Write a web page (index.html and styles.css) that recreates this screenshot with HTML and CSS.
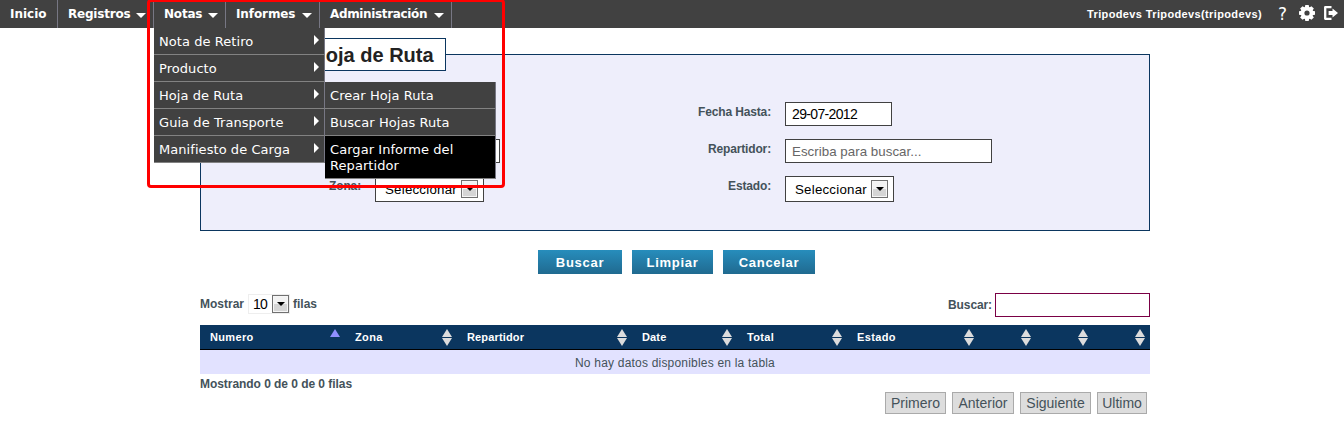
FILE: index.html
```html
<!DOCTYPE html>
<html lang="es">
<head>
<meta charset="utf-8">
<title>Hoja de Ruta</title>
<link rel="stylesheet" href="styles.css">
</head>
<body>
<header class="topbar">
  <nav class="menu">
    <a class="item inicio">Inicio</a>
    <a class="item registros">Registros<i class="down"></i></a>
    <div class="item notas">Notas<i class="down"></i>
      <div class="submenu">
        <a>Nota de Retiro<i class="right"></i></a>
        <a>Producto<i class="right"></i></a>
        <a>Hoja de Ruta<i class="right"></i></a>
        <a>Guia de Transporte<i class="right"></i></a>
        <a>Manifiesto de Carga<i class="right"></i></a>
      </div>
      <div class="submenu second">
        <a>Crear Hoja Ruta</a>
        <a>Buscar Hojas Ruta</a>
        <a class="active">Cargar Informe del<br>Repartidor</a>
      </div>
    </div>
    <a class="item informes">Informes<i class="down"></i></a>
    <a class="item admin">Administración<i class="down"></i></a>
  </nav>
  <div class="user">
    <span class="name">Tripodevs Tripodevs(tripodevs)</span>
    <span class="help">?</span>
    <svg class="gear" width="16" height="16" viewBox="0 0 16 16"><g fill="#fff"><path d="M6.3 0h3.4l.6 3H5.700zM6.300 16h3.400l.6-3H5.700z"/><path transform="rotate(45 8 8)" d="M6.300 0h3.400l.6 3H5.700zM6.300 16h3.400l.6-3H5.700z"/><path transform="rotate(90 8 8)" d="M6.300 0h3.400l.6 3H5.700zM6.300 16h3.400l.6-3H5.700z"/><path transform="rotate(135 8 8)" d="M6.300 0h3.400l.6 3H5.700zM6.300 16h3.400l.6-3H5.700z"/></g><circle cx="8" cy="8" r="4.400" fill="none" stroke="#fff" stroke-width="3.600"/></svg>
    <svg class="exit" width="14" height="14" viewBox="0 0 14 14"><path d="M7.500 1.200H1.200V12.800H7.500" fill="none" stroke="#fff" stroke-width="2.300" stroke-linejoin="round"/><path fill="#fff" d="M4.600 5H8.500V2.500L14 7 8.500 11.500V9H4.600z"/></svg>
  </div>
</header>

<main class="page">
  <fieldset class="filters">
    <legend>Buscar Hoja de Ruta</legend>
    <div class="form">
      <span></span><div></div>
      <label>Fecha Hasta:</label><div><span class="field date">29-07-2012</span></div>
      <span></span><div><span class="field number"></span></div>
      <label>Repartidor:</label><div><span class="field search">Escriba para buscar...</span></div>
      <label>Zona:</label><div><span class="field select">Seleccionar<b class="arrow"></b></span></div>
      <label>Estado:</label><div><span class="field select">Seleccionar<b class="arrow"></b></span></div>
    </div>
  </fieldset>

  <div class="actions">
    <button class="buscar">Buscar</button>
    <button class="limpiar">Limpiar</button>
    <button class="cancelar">Cancelar</button>
  </div>

  <div class="tools">
    <div class="length">Mostrar<span class="rows">10<b class="arrow"></b></span>filas</div>
    <div class="filter">Buscar:<input type="text"></div>
  </div>

  <table class="grid">
    <colgroup><col class="c145"><col class="c112"><col class="c175"><col class="c105"><col class="c110"><col class="c132"><col class="c57"><col class="c57"><col class="c57"></colgroup>
    <thead><tr>
      <th><div>Numero<i class="sort asc"></i></div></th>
      <th><div>Zona<i class="sort"></i></div></th>
      <th><div>Repartidor<i class="sort"></i></div></th>
      <th><div>Date<i class="sort"></i></div></th>
      <th><div>Total<i class="sort"></i></div></th>
      <th><div>Estado<i class="sort"></i></div></th>
      <th><div><i class="sort"></i></div></th>
      <th><div><i class="sort"></i></div></th>
      <th><div><i class="sort"></i></div></th>
    </tr></thead>
    <tbody><tr><td colspan="9">No hay datos disponibles en la tabla</td></tr></tbody>
  </table>

  <div class="info">Mostrando 0 de 0 de 0 filas</div>
  <div class="pager"><a class="p1">Primero</a><a class="p2">Anterior</a><a class="p3">Siguiente</a><a class="p4">Ultimo</a></div>
</main>
<div class="highlight"></div>
</body>
</html>
```
FILE: styles.css
```css
* { box-sizing: border-box; }
body {
  margin: 0;
  height: 422px;
  overflow: hidden;
  background: #fff;
  color: #44525a;
  font-family: "Liberation Sans", Arial, sans-serif;
  font-size: 12px;
}

/* top bar */
.topbar {
  display: flex;
  justify-content: space-between;
  height: 28px;
  background: #414141;
  color: #fff;
}
.menu {
  display: flex;
  font: bold 12px/28px "DejaVu Sans", Verdana, sans-serif;
  letter-spacing: -.2px;
}
.item {
  position: relative;
  display: flex;
  justify-content: space-between;
  align-items: center;
  height: 28px;
  padding: 0 7px 0 10px;
  border-right: 1px solid #777784;
  white-space: nowrap;
}
.inicio { width: 58px; letter-spacing: 0; }
.registros { width: 96px; }
.notas { width: 72px; }
.informes { width: 94px; letter-spacing: -.1px; }
.admin { width: 132px; letter-spacing: -.35px; }
.down {
  border: 5px solid transparent;
  border-top-color: #fff;
  border-bottom: 0;
  margin-top: 2px;
}
.submenu {
  position: absolute;
  z-index: 2;
  left: 0;
  top: 28px;
  width: 171px;
  font-weight: normal;
  font-size: 13px;
  letter-spacing: .06px;
}
.submenu.second { left: 171px; top: 82px; }
.submenu a {
  display: flex;
  justify-content: space-between;
  align-items: center;
  min-height: 27px;
  padding: 2px 5px 0;
  line-height: 16px;
  background: #414141;
  border-right: 1px solid #777784;
  border-bottom: 1px solid #828282;
}
.submenu a.active { height: 43px; background: #000; }
.right {
  border: 5px solid transparent;
  border-left-color: #fff;
  border-right: 0;
  margin-top: -4px;
}
.user { display: flex; align-items: center; padding-right: 6px; }
.name { font-size: 11px; font-weight: bold; letter-spacing: .37px; margin-top: -1px; }
.help { font: 17px/28px "DejaVu Sans", sans-serif; margin-left: 16px; }
.gear { margin: -2px 0 0 12px; }
.exit { margin: -2px 0 0 9px; }

/* search form */
.page { width: 950px; margin: 10px 0 0 200px; }
.filters {
  height: 193px;
  margin: 0;
  padding: 0 0 0 25px;
  border: 1px solid #0b365f;
  background: #eeeefb;
}
legend {
  height: 33px;
  padding: 0 11px;
  border: 1px solid #0b365f;
  background: #fff;
  color: #222;
  font-size: 20px;
  font-weight: bold;
  line-height: 32px;
}
.form {
  display: grid;
  grid-template-columns: 135px 285px 125px 300px;
  grid-template-rows: 37px 37px 26px;
  padding-top: 31px;
}
.form label {
  line-height: 21px;
  text-align: right;
  font-weight: bold;
  letter-spacing: -.15px;
}
.form div { padding-left: 14px; }
.field {
  display: flex;
  align-items: center;
  height: 24px;
  padding: 0 6px;
  border: 1px solid #414141;
  background: #fff;
  color: #000;
  font-size: 14px;
}
.date { width: 107px; letter-spacing: -.65px; }
.number { width: 125px; }
.search { width: 207px; color: #666; font-size: 13.3px; letter-spacing: .04px; }
.select {
  justify-content: space-between;
  width: 109px;
  height: 26px;
  padding: 0 5px 0 9px;
  font-size: 13.3px;
  letter-spacing: .22px;
}
.arrow {
  display: grid;
  place-items: center;
  width: 17px;
  height: 18px;
  border: 1px solid #707070;
  background: linear-gradient(#f2f2f2 50%, #d5d5d5 50%);
  box-shadow: inset 0 0 0 1px #f6f6f6;
}
.arrow::after { content: ""; border: 4px solid transparent; border-top-color: #000; border-bottom: 0; }

/* buttons */
.actions { display: flex; gap: 10px; margin: 19px 0 0 338px; }
.actions button {
  height: 24px;
  padding: 0;
  border: 0;
  background: linear-gradient(#278dbc, #206a90);
  color: #fff;
  font: bold 13px "Liberation Sans", Arial, sans-serif;
  letter-spacing: .7px;
}
.buscar { width: 84px; }
.limpiar { width: 81px; }
.cancelar { width: 92px; }

/* table controls */
.tools { display: flex; justify-content: space-between; height: 51px; padding-top: 19px; font-weight: bold; }
.length { display: flex; align-items: center; height: 21px; }
.rows {
  display: flex;
  align-items: center;
  justify-content: space-between;
  width: 42px;
  height: 20px;
  margin: 0 3px 0 4px;
  padding: 0 0 0 4px;
  border: 1px solid #eee;
  color: #000;
  font-size: 14px;
  font-weight: normal;
  letter-spacing: -.7px;
}
.filter { display: flex; align-items: center; height: 24px; gap: 3px; letter-spacing: -.1px; }
.filter input { width: 155px; height: 24px; border: 1px solid #7a0045; background: #fff; }

.grid { width: 950px; table-layout: fixed; border-collapse: collapse; }
.c145 { width: 145px; }
.c112 { width: 112px; }
.c175 { width: 175px; }
.c105 { width: 105px; }
.c110 { width: 110px; }
.c132 { width: 132px; }
.c57 { width: 57px; }
.grid th { padding: 0; }
.grid th div {
  display: flex;
  align-items: center;
  height: 25px;
  padding: 0 5px 0 10px;
  background: #0b365f;
  border-bottom: 1px solid #000;
  color: #fff;
  font-size: 11px;
  letter-spacing: .35px;
}
.grid th:nth-child(3) div,
.grid th:nth-child(4) div { letter-spacing: .15px; }
.sort { display: grid; gap: 1px; margin-left: auto; }
.sort::before, .sort::after { content: ""; border: 5px solid transparent; }
.sort::before { border-bottom: 8px solid #dcdcdc; border-top: 0; }
.sort::after { border-top: 8px solid #dcdcdc; border-bottom: 0; }
.sort.asc::before { border-bottom-color: #8f8fff; }
.sort.asc::after { border-top-color: transparent; }
.grid td { height: 24px; padding: 2px 0 0; background: #e2e2ff; text-align: center; letter-spacing: .2px; }
.info { height: 18px; padding-top: 3px; font-weight: bold; line-height: 14px; letter-spacing: -.05px; }
.pager { display: flex; justify-content: flex-end; padding-right: 3px; font-size: 14px; }
.pager a {
  height: 22px;
  border: 1px solid #aaa;
  background: #ddd;
  text-align: center;
  line-height: 21px;
}
.p1 { width: 61px; margin-right: 6px; }
.p2 { width: 62px; margin-right: 6px; }
.p3 { width: 71px; margin-right: 6px; }
.p4 { width: 50px; }

/* callout frame around the open menu */
.highlight {
  position: absolute;
  z-index: 5;
  left: 147px;
  top: -1px;
  width: 358px;
  height: 189px;
  border: 3px solid #f00;
  border-radius: 4px;
}
```
